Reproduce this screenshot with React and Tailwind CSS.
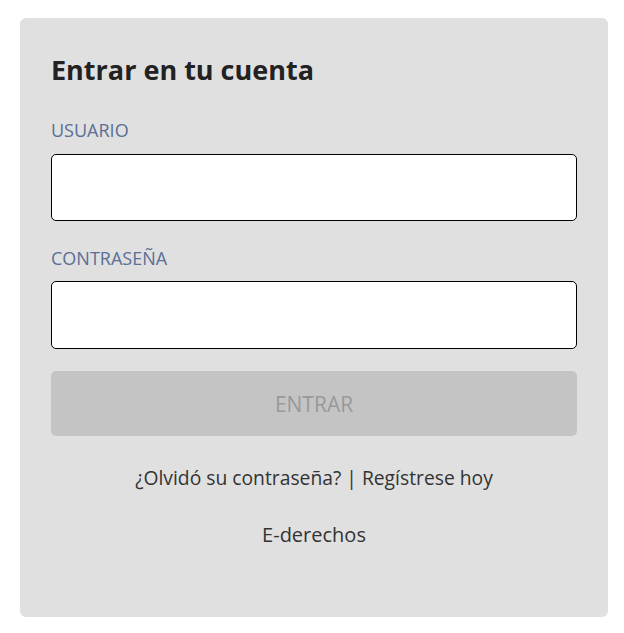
export default function App() {
  return (
    <div className="min-h-screen bg-white pl-5 pr-4 pt-[18px] font-['Open_Sans',sans-serif]">
      <div className="flex h-[599px] flex-col rounded-md bg-[#e0e0e0] px-[31px] pt-[38px]">
        <h1 className="text-[27px] font-bold leading-[27px] text-[#222]">
          Entrar en tu cuenta
        </h1>
        <label className="mt-[36px] text-[18px] leading-[22px] text-[#5a6f95]">
          USUARIO
        </label>
        <input
          type="text"
          className="mt-[13px] h-[67px] rounded-[5px] border border-black bg-white px-3 outline-none"
        />
        <label className="mt-[26px] text-[18px] leading-[22px] text-[#5a6f95]">
          CONTRASEÑA
        </label>
        <input
          type="password"
          className="mt-[12px] h-[68px] rounded-[5px] border border-black bg-white px-3 outline-none"
        />
        <button
          disabled
          className="mt-[22px] h-[65px] rounded-[5px] bg-[#c4c4c4] pt-[2px] text-[21px] text-[#999]"
        >
          ENTRAR
        </button>
        <p className="mt-[29px] text-center text-[19.3px] leading-[26px] text-[#333]">
          <a href="#">¿Olvidó su contraseña?</a> | <a href="#">Regístrese hoy</a>
        </p>
        <p className="mt-[31px] text-center text-[20px] leading-[26px] text-[#333]">
          <a href="#">E-derechos</a>
        </p>
      </div>
    </div>
  )
}
